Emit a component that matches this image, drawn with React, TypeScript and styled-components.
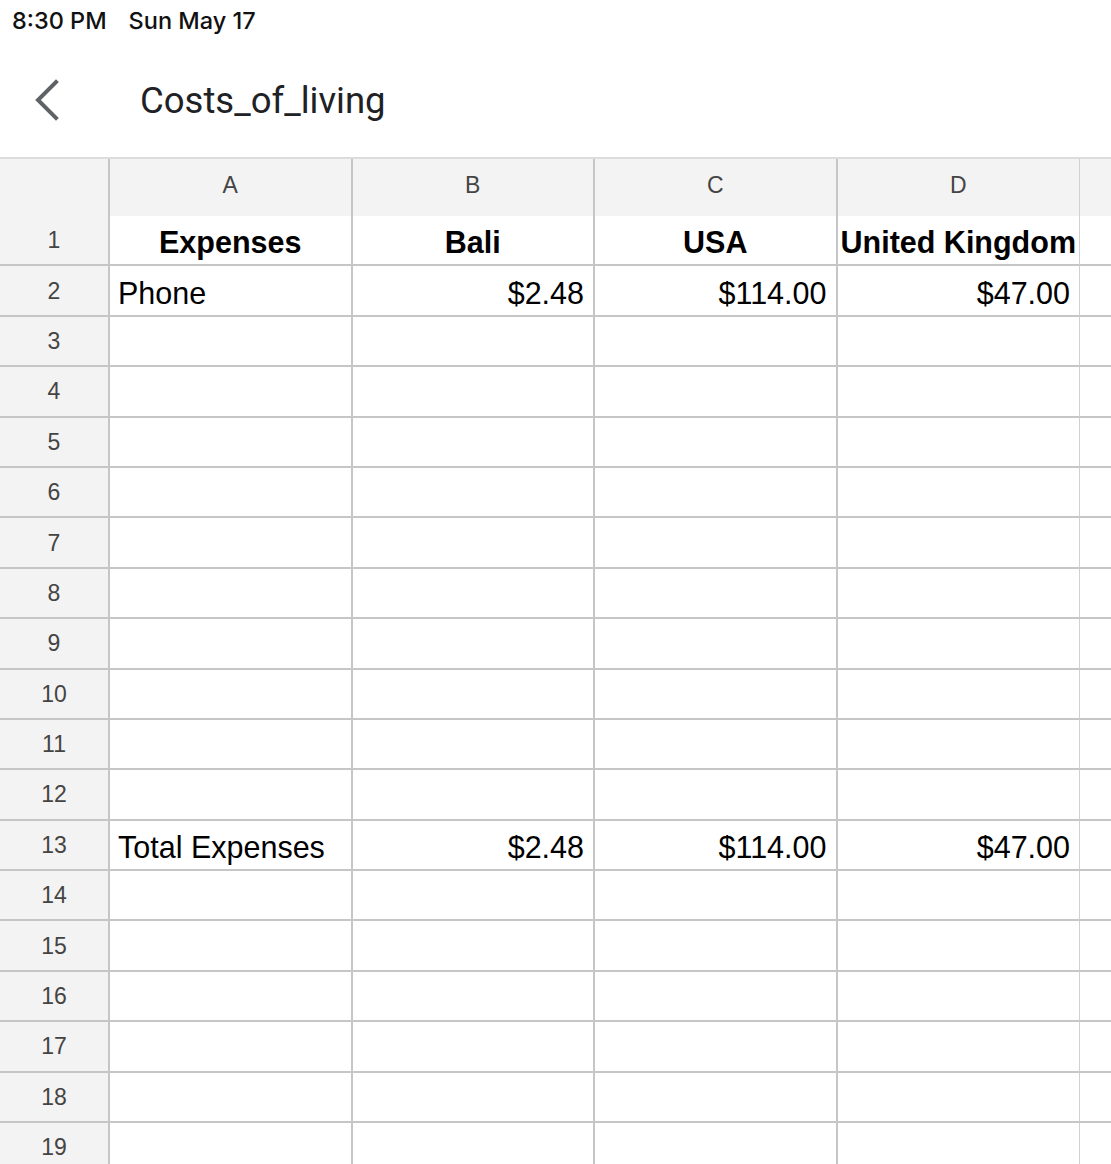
import styled, { createGlobalStyle } from 'styled-components';

const GlobalStyle = createGlobalStyle`
    html, body {
        margin: 0;
        padding: 0;
        background: #fff;
    }
    body {
        font-family: 'Liberation Sans', Arial, sans-serif;
        overflow: hidden;
    }
`

const columns = ['A', 'B', 'C', 'D']

type CellData = { text: string; bold?: boolean; align?: 'left' | 'center' | 'right' }

const data: Record<number, CellData[]> = {
    1: [
        { text: 'Expenses', bold: true, align: 'center' },
        { text: 'Bali', bold: true, align: 'center' },
        { text: 'USA', bold: true, align: 'center' },
        { text: 'United Kingdom', bold: true, align: 'center' },
    ],
    2: [
        { text: 'Phone' },
        { text: '$2.48', align: 'right' },
        { text: '$114.00', align: 'right' },
        { text: '$47.00', align: 'right' },
    ],
    13: [
        { text: 'Total Expenses' },
        { text: '$2.48', align: 'right' },
        { text: '$114.00', align: 'right' },
        { text: '$47.00', align: 'right' },
    ],
}

const rows = Array.from({ length: 19 }, (_, i) => i + 1)

const BackIcon = () => (
    <svg width="30" height="42" viewBox="0 0 30 42" fill="none">
        <polyline points="23,3 5,21 23,39" stroke="#5f6368" strokeWidth="4" strokeLinecap="square" strokeLinejoin="miter" />
    </svg>
)

export default function App() {
    return (
        <>
            <GlobalStyle />
            <Page>
                <StatusBar>
                    <span>8:30 PM</span>
                    <span>Sun May 17</span>
                </StatusBar>
                <TitleBar>
                    <BackButton>
                        <BackIcon />
                    </BackButton>
                    <Title>Costs_of_living</Title>
                </TitleBar>
                <Sheet>
                    <Corner />
                    {columns.map((c, i) => (
                        <ColHeader key={c} $last={i === columns.length - 1}>{c}</ColHeader>
                    ))}
                    <ColHeaderFill />
                    {rows.map((r) => (
                        <Row key={r} r={r} />
                    ))}
                </Sheet>
            </Page>
        </>
    )
}

const Row = ({ r }: { r: number }) => {
    const cells = data[r] || []
    return (
        <>
            <RowHeader>{r}</RowHeader>
            {columns.map((c, i) => {
                const cell = cells[i]
                return (
                    <Cell key={c} $align={cell?.align || 'left'} $bold={cell?.bold} $last={i === columns.length - 1}>
                        {cell?.text}
                    </Cell>
                )
            })}
            <FillCell />
        </>
    )
}

const Page = styled.div`
    width: 1111px;
    height: 1164px;
    overflow: hidden;
`

const StatusBar = styled.div`
    height: 40px;
    display: flex;
    align-items: center;
    gap: 22px;
    padding-left: 12px;
    font-family: Inter, 'Noto Sans', sans-serif;
    font-size: 23.5px;
    font-weight: 500;
    color: #111;
`

const TitleBar = styled.div`
    height: 117px;
    display: flex;
    align-items: center;
`

const BackButton = styled.div`
    width: 30px;
    height: 42px;
    margin-left: 33px;
    margin-top: 2px;
    display: flex;
`

const Title = styled.div`
    margin-left: 77px;
    margin-top: 3px;
    font-family: Roboto, 'Open Sans', sans-serif;
    font-size: 36.5px;
    color: #202124;
`

const Sheet = styled.div`
    display: grid;
    grid-template-columns: 110px repeat(4, 242.5px) 1fr;
    grid-template-rows: 57px;
    grid-auto-rows: 50.4px;
    border-top: 2px solid #dcdcdc;
`

const Corner = styled.div`
    background: #f3f3f3;
    border-right: 2px solid #c6c6c6;
`

const ColHeader = styled.div<{ $last?: boolean }>`
    background: #f3f3f3;
    border-right: ${(p) => (p.$last ? '1px solid #d0d0d0' : '2px solid #c6c6c6')};
    display: flex;
    align-items: center;
    justify-content: center;
    font-size: 23px;
    color: #444;
    padding-bottom: 4px;
    box-sizing: border-box;
`

const ColHeaderFill = styled.div`
    background: #f3f3f3;
`

const RowHeader = styled.div`
    background: #f3f3f3;
    border-right: 2px solid #c6c6c6;
    border-bottom: 2px solid #c6c6c6;
    display: flex;
    align-items: center;
    justify-content: center;
    padding-top: 1px;
    font-size: 23px;
    color: #444;
    box-sizing: border-box;
`

const Cell = styled.div<{ $align: 'left' | 'center' | 'right'; $bold?: boolean; $last?: boolean }>`
    border-right: ${(p) => (p.$last ? '1px solid #d0d0d0' : '2px solid #c6c6c6')};
    border-bottom: 2px solid #c6c6c6;
    display: flex;
    align-items: flex-end;
    justify-content: ${(p) => (p.$align === 'right' ? 'flex-end' : p.$align === 'center' ? 'center' : 'flex-start')};
    padding: ${(p) => (p.$align === 'center' ? '0 0 4px' : '0 9px 4px 8px')};
    font-size: 30.5px;
    line-height: 1.15;
    font-weight: ${(p) => (p.$bold ? 700 : 400)};
    color: #000;
    white-space: nowrap;
    overflow: hidden;
    box-sizing: border-box;
`

const FillCell = styled.div`
    border-bottom: 2px solid #c6c6c6;
`
